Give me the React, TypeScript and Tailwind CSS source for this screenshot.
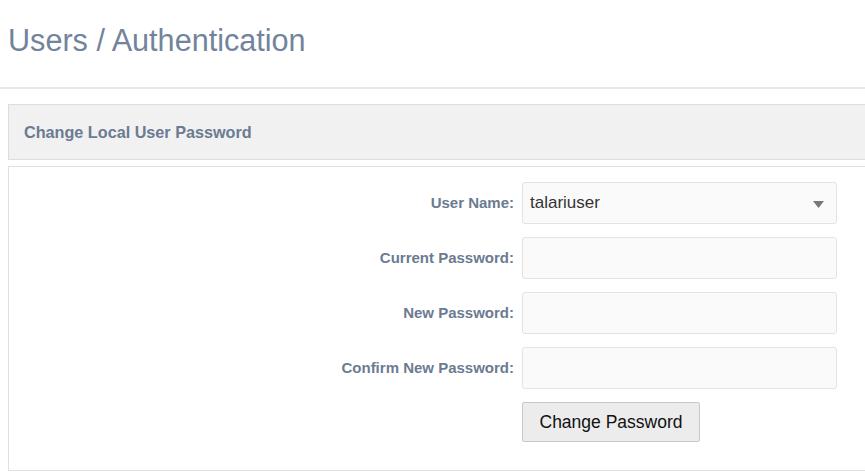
const fields = [
  { label: 'Current Password:', name: 'current' },
  { label: 'New Password:', name: 'new' },
  { label: 'Confirm New Password:', name: 'confirm' },
]

export default function App() {
  return (
    <div className="w-screen h-screen overflow-hidden bg-white font-['Liberation_Sans',Arial,sans-serif]">
      {/* Page title */}
      <div className="pt-[23px] pb-[30px] px-2 border-b-2 border-[#e8e8e8]">
        <h1 className="text-[30.6px] leading-[34px] text-[#72849b]">Users / Authentication</h1>
      </div>

      <div className="pl-2 -mr-6">
        {/* Panel heading */}
        <div className="mt-[15px] h-[56px] flex items-center pl-[15px] pt-px bg-[#f1f1f1] border border-[#dddddd]">
          <h2 className="text-[16.2px] font-bold text-[#6b7b91]">Change Local User Password</h2>
        </div>

        {/* Panel body */}
        <div className="mt-[6px] border border-[#e0e0e0] pt-[15px] pb-[28px]">
          <div className="grid grid-cols-[505px_315px] gap-x-2 gap-y-[13px] items-center">
            <label className="text-right text-[15px] font-bold text-[#6b7b91] pt-px">User Name:</label>
            <div className="relative h-[42px] rounded-[3px] border border-[#e3e3e3] bg-[#fafafa] flex items-center pl-[7px]">
              <span className="text-[17px] text-[#333333]">talariuser</span>
              <svg className="absolute right-[12px] top-[18px]" width="11" height="7" viewBox="0 0 11 7">
                <path d="M0 0H11L5.5 7Z" fill="#777777" />
              </svg>
            </div>

            {fields.map(f => (
              <div key={f.name} className="contents">
                <label className="text-right text-[15px] font-bold text-[#6b7b91] pt-px">{f.label}</label>
                <input
                  type="password"
                  className="h-[42px] rounded-[3px] border border-[#e3e3e3] bg-[#fafafa] outline-none"
                />
              </div>
            ))}

            <div />
            <div>
              <button className="h-[40px] w-[178px] rounded-[2px] border border-[#c8c8c8] bg-[#ececec] text-[17.5px] text-[#111111]">
                Change Password
              </button>
            </div>
          </div>
        </div>
      </div>
    </div>
  )
}
